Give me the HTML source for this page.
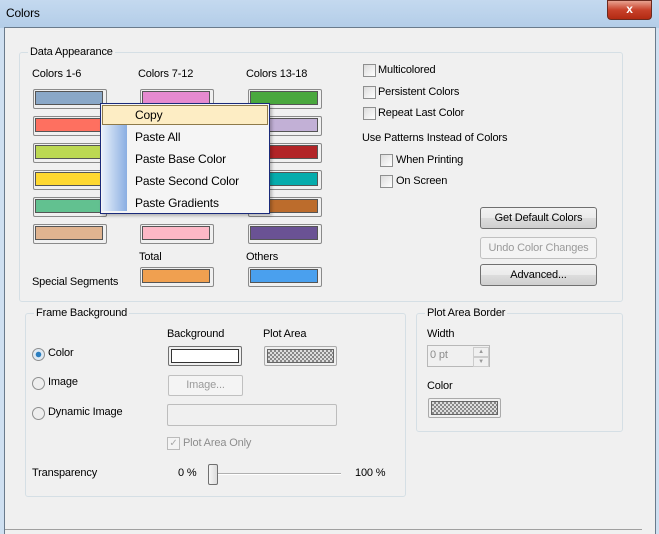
<!DOCTYPE html><html><head><style>
body{margin:0;width:659px;height:533px;overflow:hidden;font-family:"Liberation Sans",sans-serif;font-size:11px;letter-spacing:-0.15px;color:#000;background:#cfe0f1;position:relative}
.a{position:absolute;white-space:nowrap}
.grp{position:absolute;border:1px solid #d5dfe5;border-radius:3px}
.lg{position:absolute;background:#f0f0f0;padding:0 2px;top:-7px;left:8px}
.sw{position:absolute;width:70px;height:16px;border:1px solid #8a8a8a;border-radius:2px;background:#f0f0f0;padding:1px}
.sw i{display:block;width:66px;height:12px;border:1px solid #555}
.cb{position:absolute;width:11px;height:11px;border:1px solid #8e8f8f;background:linear-gradient(135deg,#dcdcdc,#fff)}
.btn{position:absolute;width:115px;height:20px;border:1px solid #707070;border-radius:3px;background:linear-gradient(#f2f2f2,#ebebeb 50%,#dddddd 50%,#cfcfcf);text-align:center;line-height:20px}
.rd{position:absolute;width:11px;height:11px;border:1px solid #8e8f8f;border-radius:50%;background:#eee}
.chk{background:repeating-conic-gradient(#888 0 25%,#ddd 0 50%) 0 0/4px 4px}
</style></head><body>
<div class="a" style="left:0;top:0;width:659px;height:28px;background:linear-gradient(#c4d9ef,#b3cde8)"></div>
<div class="a" style="left:6px;top:6px;font-size:12px">Colors</div>
<div class="a" style="left:607px;top:0;width:43px;height:18px;background:linear-gradient(#e8a18f,#c8412a 50%,#b22a12);border:1px solid #6b2a1f;border-radius:0 0 4px 4px;color:#fff;text-align:center;font-weight:bold;font-size:12px;line-height:17px">x</div>
<div class="a" style="left:4px;top:27px;width:650px;height:506px;background:#f0f0f0;border:1px solid #6a7b8c;border-bottom:none"></div>
<div class="a" style="left:5px;top:529px;width:637px;height:1px;background:#a0a0a0"></div>

<div class="grp" style="left:19px;top:52px;width:602px;height:248px"><span class="lg">Data Appearance</span></div>
<div class="a" style="left:32px;top:68px">Colors 1-6</div>
<div class="a" style="left:138px;top:68px">Colors 7-12</div>
<div class="a" style="left:246px;top:68px">Colors 13-18</div>

<div class="sw" style="left:33px;top:89px"><i style="background:#8aa8c8"></i></div>
<div class="sw" style="left:33px;top:116px"><i style="background:#fe7060"></i></div>
<div class="sw" style="left:33px;top:143px"><i style="background:#bcd852"></i></div>
<div class="sw" style="left:33px;top:170px"><i style="background:#fed830"></i></div>
<div class="sw" style="left:33px;top:197px"><i style="background:#62c190"></i></div>
<div class="sw" style="left:33px;top:224px"><i style="background:#e0b490"></i></div>
<div class="sw" style="left:140px;top:89px"><i style="background:#e68ad0"></i></div>
<div class="sw" style="left:140px;top:224px"><i style="background:#fdb8c6"></i></div>
<div class="sw" style="left:248px;top:89px"><i style="background:#4aa83e"></i></div>
<div class="sw" style="left:248px;top:116px"><i style="background:#c2b0d6"></i></div>
<div class="sw" style="left:248px;top:143px"><i style="background:#b22427"></i></div>
<div class="sw" style="left:248px;top:170px"><i style="background:#06acac"></i></div>
<div class="sw" style="left:248px;top:197px"><i style="background:#bc6c2c"></i></div>
<div class="sw" style="left:248px;top:224px"><i style="background:#6a5294"></i></div>
<div class="a" style="left:139px;top:251px">Total</div>
<div class="a" style="left:246px;top:251px">Others</div>
<div class="a" style="left:32px;top:276px">Special Segments</div>
<div class="sw" style="left:140px;top:267px"><i style="background:#f0a050"></i></div>
<div class="sw" style="left:248px;top:267px"><i style="background:#4aa0ee"></i></div>

<div class="a" style="left:100px;top:103px;width:168px;height:109px;border:1px solid #1a2a7a;background:#f5f5f5;box-shadow:2px 2px 3px rgba(0,0,0,.25)">
<div class="a" style="left:1px;top:21px;width:25px;height:86px;background:linear-gradient(90deg,#e8f0fa,#8aaee2)"></div>
<div class="a" style="left:1px;top:1px;width:164px;height:18px;background:#fdedc4;border:1px solid #8e7a4a"></div>
<div class="a" style="left:34px;top:4px;font-size:12px">Copy</div>
<div class="a" style="left:34px;top:26px;font-size:12px">Paste All</div>
<div class="a" style="left:34px;top:48px;font-size:12px">Paste Base Color</div>
<div class="a" style="left:34px;top:70px;font-size:12px">Paste Second Color</div>
<div class="a" style="left:34px;top:92px;font-size:12px">Paste Gradients</div>
</div>

<div class="cb" style="left:363px;top:64px"></div><div class="a" style="left:378px;top:64px">Multicolored</div>
<div class="cb" style="left:363px;top:86px"></div><div class="a" style="left:378px;top:86px">Persistent Colors</div>
<div class="cb" style="left:363px;top:107px"></div><div class="a" style="left:378px;top:107px">Repeat Last Color</div>
<div class="a" style="left:362px;top:132px">Use Patterns Instead of Colors</div>
<div class="cb" style="left:380px;top:154px"></div><div class="a" style="left:396px;top:154px">When Printing</div>
<div class="cb" style="left:380px;top:175px"></div><div class="a" style="left:396px;top:175px">On Screen</div>
<div class="btn" style="left:480px;top:207px">Get Default Colors</div>
<div class="btn" style="left:480px;top:237px;background:#f4f4f4;border-color:#c0c0c0;color:#9a9a9a">Undo Color Changes</div>
<div class="btn" style="left:480px;top:264px">Advanced...</div>

<div class="grp" style="left:25px;top:313px;width:379px;height:182px"><span class="lg">Frame Background</span></div>
<div class="a" style="left:167px;top:328px">Background</div>
<div class="a" style="left:263px;top:328px">Plot Area</div>
<div class="rd" style="left:32px;top:348px;background:radial-gradient(circle,#2a7ec0 0 2.5px,#dfe9f2 3px)"></div><div class="a" style="left:48px;top:347px">Color</div>
<div class="rd" style="left:32px;top:377px"></div><div class="a" style="left:48px;top:376px">Image</div>
<div class="rd" style="left:32px;top:407px"></div><div class="a" style="left:48px;top:406px">Dynamic Image</div>
<div class="a" style="left:168px;top:346px;width:72px;height:18px;border:1px solid #707070;border-radius:2px;background:#f0f0f0"><div class="a" style="left:2px;top:2px;width:66px;height:12px;border:1px solid #333;background:#fff"></div></div>
<div class="a" style="left:264px;top:346px;width:71px;height:18px;border:1px solid #aaa;border-radius:2px;background:#f0f0f0"><div class="a chk" style="left:2px;top:2px;width:65px;height:12px;border:1px solid #666"></div></div>
<div class="a" style="left:168px;top:375px;width:73px;height:19px;border:1px solid #c0c0c0;border-radius:2px;background:#f4f4f4;color:#9a9a9a;text-align:center;line-height:19px">Image...</div>
<div class="a" style="left:167px;top:404px;width:168px;height:20px;border:1px solid #bdbdbd;border-radius:2px"></div>
<div class="cb" style="left:167px;top:437px;border-color:#bbb;background:#f4f4f4;color:#aaa;font-size:10px;line-height:11px;text-align:center">✓</div><div class="a" style="left:183px;top:437px;color:#8d8d8d">Plot Area Only</div>
<div class="a" style="left:32px;top:467px">Transparency</div>
<div class="a" style="left:178px;top:467px">0 %</div>
<div class="a" style="left:355px;top:467px">100 %</div>
<div class="a" style="left:213px;top:473px;width:128px;height:1px;background:#b0b0b0;border-bottom:1px solid #fff"></div>
<div class="a" style="left:208px;top:464px;width:8px;height:19px;border:1px solid #707070;border-radius:2px;background:linear-gradient(90deg,#f6f6f6,#dcdcdc)"></div>

<div class="grp" style="left:416px;top:313px;width:205px;height:117px"><span class="lg">Plot Area Border</span></div>
<div class="a" style="left:427px;top:328px">Width</div>
<div class="a" style="left:427px;top:345px;border:1px solid #b8b8b8;background:#f0f0f0;color:#8d8d8d;line-height:19px;padding-left:2px;box-sizing:border-box;width:63px;height:22px">0 pt</div>
<div class="a" style="left:473px;top:347px;width:14px;height:8px;border:1px solid #ccc;font-size:6px;color:#999;text-align:center;line-height:8px">▲</div>
<div class="a" style="left:473px;top:357px;width:14px;height:8px;border:1px solid #ccc;font-size:6px;color:#999;text-align:center;line-height:8px">▼</div>
<div class="a" style="left:427px;top:380px">Color</div>
<div class="a" style="left:428px;top:398px;width:71px;height:18px;border:1px solid #aaa;border-radius:2px;background:#f0f0f0"><div class="a chk" style="left:2px;top:2px;width:65px;height:12px;border:1px solid #666"></div></div>
</body></html>
